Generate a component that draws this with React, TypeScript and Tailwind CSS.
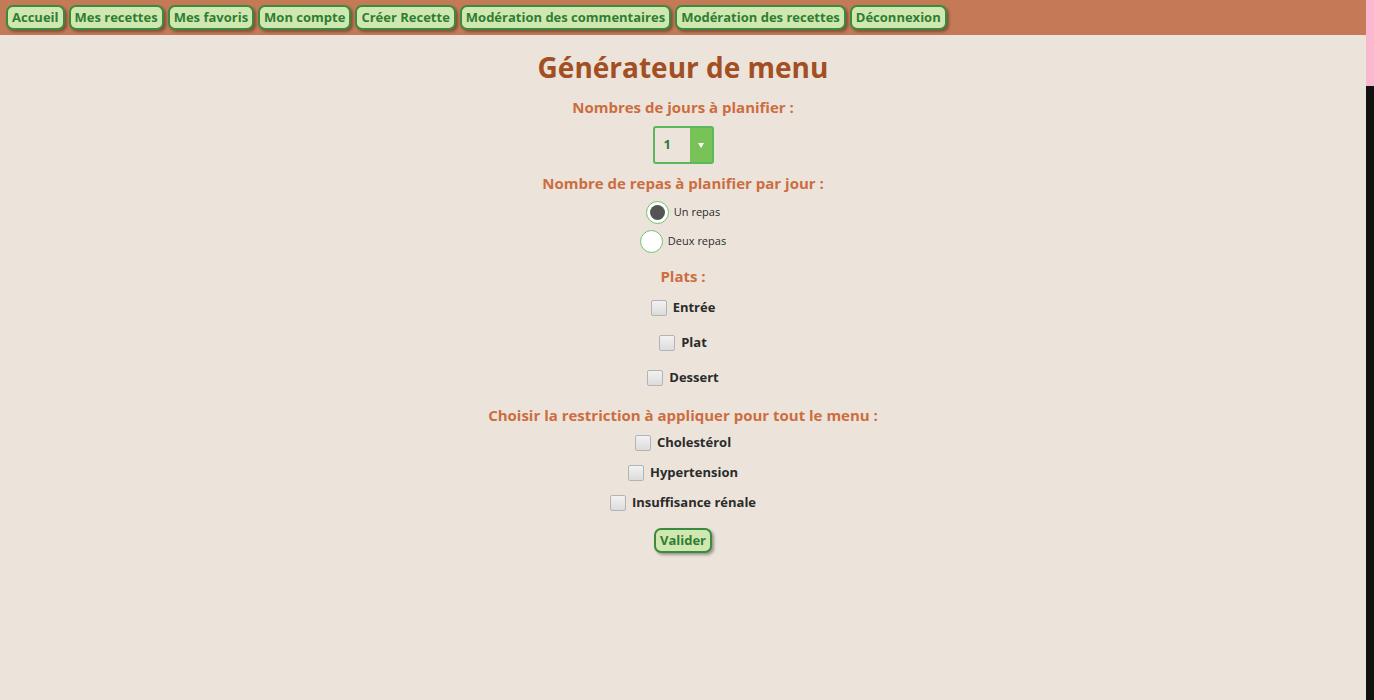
import React, { useState } from "react";

const navItems = [
  "Accueil",
  "Mes recettes",
  "Mes favoris",
  "Mon compte",
  "Créer Recette",
  "Modération des commentaires",
  "Modération des recettes",
  "Déconnexion",
];

const font = { fontFamily: '"Open Sans", "Noto Sans", sans-serif' };

function GreenButton({ label }: { label: string }) {
  return (
    <button className="h-[25px] px-[4px] rounded-[7px] border-2 border-[#3b8b3b] bg-[#cfe8b1] text-[13px] font-bold text-[#2f7d31] leading-none shadow-[2px_2px_3px_rgba(0,0,0,0.35)] whitespace-nowrap">
      {label}
    </button>
  );
}

function Heading({ text, className }: { text: string; className: string }) {
  return (
    <div
      className={`h-[20px] flex items-center text-[15px] font-bold text-[#cc6d3f] ${className}`}
    >
      {text}
    </div>
  );
}

function Check({ label, className }: { label: string; className: string }) {
  const [checked, setChecked] = useState(false);
  return (
    <label
      className={`h-[20px] flex items-center gap-[6px] cursor-pointer ${className}`}
    >
      <span
        onClick={() => setChecked(!checked)}
        className="w-[16px] h-[16px] rounded-[2px] border border-[#b3b3b3] bg-gradient-to-b from-[#f2f2f2] to-[#dcdcdc] flex items-center justify-center text-[11px] text-[#333]"
      >
        {checked ? "✓" : ""}
      </span>
      <span className="text-[13px] font-bold text-[#2b2b2b]">{label}</span>
    </label>
  );
}

function Radio({
  label,
  selected,
  onSelect,
  className,
}: {
  label: string;
  selected: boolean;
  onSelect: () => void;
  className: string;
}) {
  return (
    <div
      onClick={onSelect}
      className={`h-[24px] flex items-center gap-[5px] cursor-pointer ${className}`}
    >
      <span className="w-[23px] h-[23px] rounded-full border-[1.5px] border-[#6cc46c] bg-white flex items-center justify-center">
        {selected && (
          <span className="w-[15px] h-[15px] rounded-full bg-[#545454]" />
        )}
      </span>
      <span className="text-[11px] text-[#2b2b2b]">{label}</span>
    </div>
  );
}

export default function App() {
  const [meals, setMeals] = useState(1);
  const [days] = useState(1);

  return (
    <div className="flex w-[1374px] h-[700px] overflow-hidden" style={font}>
      <div className="flex-1 flex flex-col bg-[#ece4db]">
        <div className="h-[35px] bg-[#c57a57] flex items-center gap-[4px] pl-[6px] pb-[1px]">
          {navItems.map((item) => (
            <GreenButton key={item} label={item} />
          ))}
        </div>

        <div className="flex flex-col items-center">
          <h1 className="mt-[14px] h-[36px] flex items-center text-[28px] font-bold text-[#a34f24]">
            Générateur de menu
          </h1>

          <Heading text="Nombres de jours à planifier :" className="mt-[12px]" />

          <div className="mt-[9px] w-[61px] h-[38px] rounded-[3px] border-2 border-[#5cb85c] flex">
            <div className="flex-1 flex items-center pl-[9px] text-[13px] font-bold text-[#2f7d31]">
              {days}
            </div>
            <div className="w-[22px] bg-[#78c257] flex items-center justify-center">
              <svg width="6" height="5" viewBox="0 0 6 5">
                <path d="M0 0 L6 0 L3 5 Z" fill="#ffffff" />
              </svg>
            </div>
          </div>

          <Heading
            text="Nombre de repas à planifier par jour :"
            className="mt-[9px]"
          />

          <Radio
            label="Un repas"
            selected={meals === 1}
            onSelect={() => setMeals(1)}
            className="mt-[7px]"
          />
          <Radio
            label="Deux repas"
            selected={meals === 2}
            onSelect={() => setMeals(2)}
            className="mt-[5px]"
          />

          <Heading text="Plats :" className="mt-[13px]" />

          <Check label="Entrée" className="mt-[12px]" />
          <Check label="Plat" className="mt-[15px]" />
          <Check label="Dessert" className="mt-[15px]" />

          <Heading
            text="Choisir la restriction à appliquer pour tout le menu :"
            className="mt-[17px]"
          />

          <Check label="Cholestérol" className="mt-[8px]" />
          <Check label="Hypertension" className="mt-[10px]" />
          <Check label="Insuffisance rénale" className="mt-[10px]" />

          <div className="mt-[14px]">
            <GreenButton label="Valider" />
          </div>
        </div>
      </div>

      <div className="w-[8px] flex flex-col">
        <div className="h-[86px] bg-[#fbb6d0]" />
        <div className="flex-1 bg-[#121212]" />
      </div>
    </div>
  );
}
